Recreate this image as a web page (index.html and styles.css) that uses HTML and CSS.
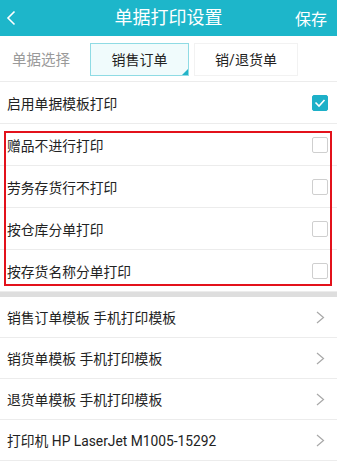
FILE: index.html
```html
<!DOCTYPE html>
<html lang="zh">
<head>
<meta charset="utf-8">
<link rel="stylesheet" href="styles.css">
</head>
<body>
<div class="page">
  <header class="topbar">
    <span class="back"><svg width="10" height="16" viewBox="0 0 10 16"><path d="M8.5 1.5 L2 8 L8.5 14.5" fill="none" stroke="#fff" stroke-width="1.6"/></svg></span>
    <span class="title">单据打印设置</span>
    <span class="save">保存</span>
  </header>
  <div class="tabs">
    <span class="tabs-label">单据选择</span>
    <span class="tab tab-active">销售订单<i class="corner"></i></span>
    <span class="tab">销/退货单</span>
  </div>
  <div class="section">
    <div class="row"><span class="text">启用单据模板打印</span><span class="check checked"><svg width="12" height="10" viewBox="0 0 12 10"><path d="M1.5 4.5 L5 8 L10.5 2" fill="none" stroke="#fff" stroke-width="1.6"/></svg></span></div>
    <div class="row"><span class="text">赠品不进行打印</span><span class="check"></span></div>
    <div class="row"><span class="text">劳务存货行不打印</span><span class="check"></span></div>
    <div class="row"><span class="text">按仓库分单打印</span><span class="check"></span></div>
    <div class="row"><span class="text">按存货名称分单打印</span><span class="check"></span></div>
    <div class="highlight"></div>
  </div>
  <div class="band"></div>
  <div class="section">
    <div class="row row-link"><span class="text">销售订单模板 手机打印模板</span><span class="chev"><svg width="9" height="13" viewBox="0 0 9 13"><path d="M1 1 L7.5 6.5 L1 12" fill="none" stroke="#a8a8a8" stroke-width="1.2"/></svg></span></div>
    <div class="row row-link"><span class="text">销货单模板 手机打印模板</span><span class="chev"><svg width="9" height="13" viewBox="0 0 9 13"><path d="M1 1 L7.5 6.5 L1 12" fill="none" stroke="#a8a8a8" stroke-width="1.2"/></svg></span></div>
    <div class="row row-link"><span class="text">退货单模板 手机打印模板</span><span class="chev"><svg width="9" height="13" viewBox="0 0 9 13"><path d="M1 1 L7.5 6.5 L1 12" fill="none" stroke="#a8a8a8" stroke-width="1.2"/></svg></span></div>
    <div class="row row-link"><span class="text">打印机 HP LaserJet M1005-15292</span><span class="chev"><svg width="9" height="13" viewBox="0 0 9 13"><path d="M1 1 L7.5 6.5 L1 12" fill="none" stroke="#a8a8a8" stroke-width="1.2"/></svg></span></div>
  </div>
</div>
</body>
</html>
```
FILE: styles.css
```css
* { box-sizing: border-box; }
html, body { margin: 0; padding: 0; background: #fff; }
body { font-family: "Roboto", "Noto Sans CJK SC", sans-serif; color: #222; }
.page { width: 337px; height: 466px; overflow: hidden; position: relative; background: #fff; }
.topbar {
  height: 36px; background: #1db6ca; color: #fff;
  display: flex; align-items: center; justify-content: space-between;
  padding: 0 10px 0 6px; position: relative;
}
.back { display: flex; align-items: center; width: 10px; height: 16px; }
.title { position: absolute; left: 0; right: 0; text-align: center; font-size: 18px; line-height: 36px; pointer-events: none; }
.save { font-size: 16px; }
.tabs {
  height: 46px; display: flex; align-items: center;
  padding-left: 12px; border-bottom: 1px solid #ececec;
}
.tabs-label { font-size: 14.5px; color: #9a9a9a; width: 78px; }
.tab {
  position: relative; height: 33px; display: flex; align-items: center; justify-content: center;
  font-size: 14px; color: #222; border: 1px solid #f2f2f2; background: #fff;
  width: 104px; margin-left: 5px; margin-top: 1px;
}
.tab-active { width: 99px; margin-left: 0; background: #f0fbfc; border-color: #8fdbe4; }
.corner {
  position: absolute; right: 0; bottom: 0; width: 0; height: 0;
  border-style: solid; border-width: 0 0 6px 6px;
  border-color: transparent transparent #22b3c8 transparent;
}
.section { position: relative; }
.row {
  height: 42px; display: flex; align-items: center; justify-content: space-between;
  padding: 0 9px 0 7px; border-bottom: 1px solid #ececec;
}
.row-link { height: 41px; padding-right: 12px; }
.text { font-size: 13.8px; color: #222; }
.check {
  width: 16px; height: 16px; border: 1px solid #cfcfcf; border-radius: 2px;
  display: flex; align-items: center; justify-content: center; background: #fff;
}
.checked { background: #1db0c8; border-color: #1db0c8; }
.chev { display: flex; align-items: center; }
.band { height: 5px; background: #dedede; }
.highlight {
  position: absolute; left: 4px; top: 49px; width: 328px; height: 155px;
  border: 2px solid #e3111b;
}
```
